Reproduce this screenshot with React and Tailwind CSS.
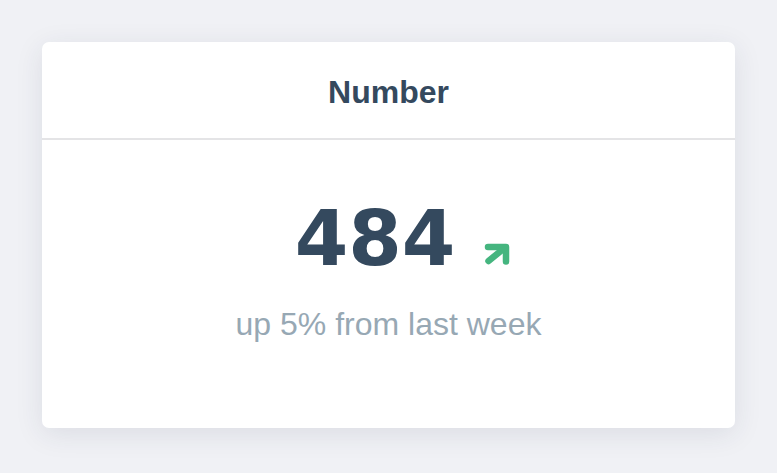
import React from "react";

// Small trend arrow drawn inline
const TrendUp = () => (
  <svg
    width="26"
    height="22"
    viewBox="0 0 26 22"
    fill="none"
    stroke="#45b57f"
    strokeWidth="6.5"
    strokeLinecap="round"
    strokeLinejoin="round"
    className="mb-[4px] ml-[29px] shrink-0"
  >
    <path d="M4 4H22V18.5" />
    <path d="M4.5 18L20.5 5" />
  </svg>
);

const StatCard = ({ title, value, note }) => {
  return (
    <div className="bg-white rounded-[7px] shadow-[0_6px_28px_rgba(40,50,80,0.10)] h-[386px] flex flex-col">
      <div className="h-[98px] shrink-0 flex items-center justify-center pt-[4px] border-b-2 border-[#e4e4e6]">
        <h2 className="text-[32px] leading-none font-bold text-[#34495e] font-['Liberation_Sans',Arial,sans-serif]">
          {title}
        </h2>
      </div>

      <div className="flex flex-col items-center pt-[60px]">
        <div className="flex items-baseline justify-center pl-[28px]">
          <span className="text-[77px] leading-none font-bold text-[#34495e] font-['DejaVu_Sans',Verdana,sans-serif]">
            {value}
          </span>
          <TrendUp />
        </div>
        <p className="mt-[31px] text-[32px] leading-none text-[#97a8b4] font-['Liberation_Sans',Arial,sans-serif]">
          {note}
        </p>
      </div>
    </div>
  );
};

export default function App() {
  return (
    <div className="min-h-screen bg-[#f0f1f5] p-[42px] pb-[45px]">
      <StatCard title="Number" value="484" note="up 5% from last week" />
    </div>
  );
}
